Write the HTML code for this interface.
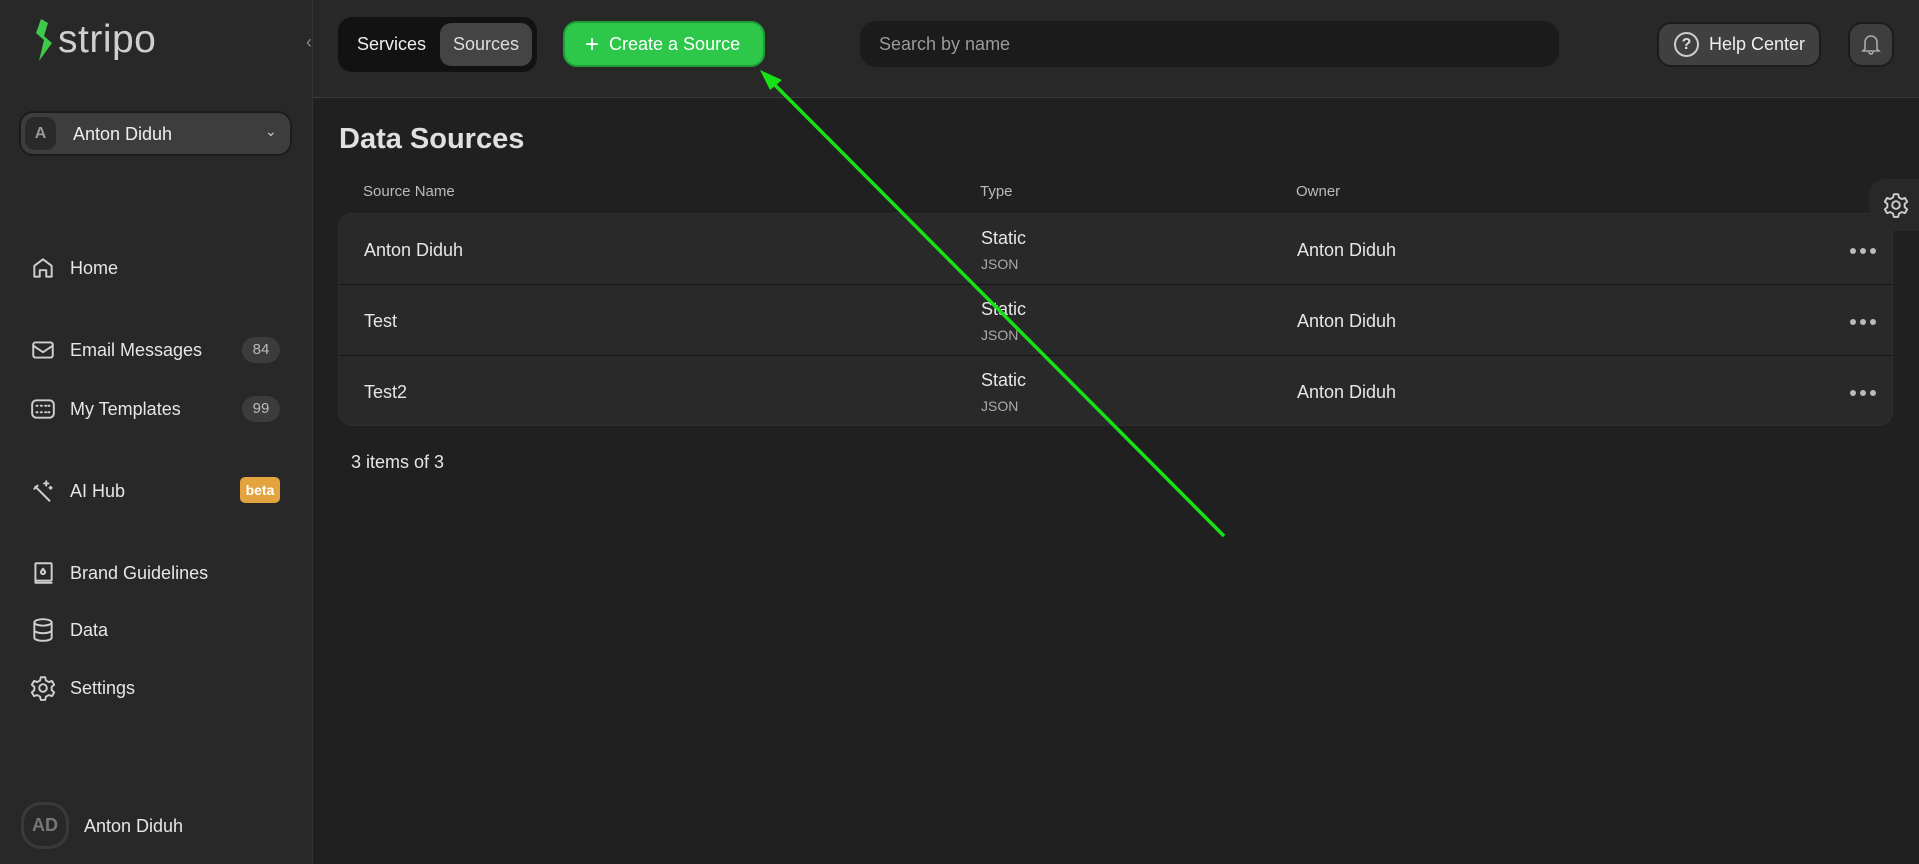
<!DOCTYPE html>
<html><head><meta charset="utf-8"><style>
*{box-sizing:border-box;margin:0;padding:0}
body{width:1919px;height:864px;overflow:hidden;background:#202020;font-family:"Liberation Sans",sans-serif;color:#e6e6e6;position:relative}
.abs{position:absolute}
#side{left:0;top:0;width:313px;height:864px;background:#282828;border-right:1px solid #333}
#head{left:313px;top:0;width:1606px;height:98px;background:#282828;border-bottom:1px solid #3a3a3a}
.nav{position:absolute;left:30px;display:flex;align-items:center;font-size:18px;color:#e6e6e6}
.nav svg{width:26px;height:26px;margin-right:14px;fill:none;stroke:#cfcfcf;stroke-width:1.8;stroke-linecap:round;stroke-linejoin:round}
.badge{position:absolute;left:242px;width:38px;height:26px;border-radius:13px;background:#3c3c3c;color:#bbb;font-size:15px;text-align:center;line-height:26px}
.row{position:absolute;left:0;width:1555px;height:71px;border-bottom:1px solid #151515}
.row .n{position:absolute;left:25px;top:26px;font-size:18px}
.row .t{position:absolute;left:642px;top:14px;font-size:18px}
.row .j{position:absolute;left:642px;top:42px;font-size:14px;color:#aaa}
.row .o{position:absolute;left:958px;top:26px;font-size:18px}
.row .d{position:absolute;right:18px;top:34px;display:flex;gap:4px}
.row .d i{width:6px;height:6px;border-radius:3px;background:#bbb}
</style></head><body>
<div id="side" class="abs">
  <svg class="abs" style="left:32px;top:18px" width="24" height="44" viewBox="0 0 24 44"><path d="M9 1 L4 15 L12 22 L7 43 L20 25 L12 18 L16 5 Z" fill="#3ec94a"/></svg>
  <div class="abs" style="left:58px;top:18px;font-size:39px;color:#cfcfcf;letter-spacing:0.5px">stripo</div>
  <div class="abs" style="left:306px;top:32px;color:#888;font-size:18px">‹</div>
  <div class="abs" style="left:19px;top:111px;width:273px;height:45px;border-radius:14px;background:#3d3d3d;border:2px solid #1c1c1c">
    <div class="abs" style="left:4px;top:4px;width:31px;height:33px;border-radius:10px;background:#2a2a2a;color:#999;font-size:16px;text-align:center;line-height:33px;font-weight:bold">A</div>
    <div class="abs" style="left:52px;top:11px;font-size:18px;color:#eee">Anton Diduh</div>
    <div class="abs" style="left:244px;top:10px;color:#ccc;font-size:14px">⌄</div>
  </div>
  <div class="nav" style="top:255px"><svg viewBox="0 0 24 24"><path d="M4 20V10l8-6 8 6v10h-5v-6h-6v6z"/></svg>Home</div>
  <div class="nav" style="top:337px"><svg viewBox="0 0 24 24"><rect x="3" y="5" width="18" height="14" rx="2"/><path d="M3 8l9 6 9-6"/></svg>Email Messages</div>
  <div class="badge" style="top:337px">84</div>
  <div class="nav" style="top:396px"><svg viewBox="0 0 24 24"><rect x="2" y="4" width="20" height="16" rx="4"/><path d="M6 9h1M10 9h1M14 9h1M17 9h1M6 15h1M10 15h1M14 15h1M17 15h1" stroke-dasharray="1 2"/></svg>My Templates</div>
  <div class="badge" style="top:396px">99</div>
  <div class="nav" style="top:478px"><svg viewBox="0 0 24 24"><path d="M5 8l13 13M4 10l3-3"/><path d="M15 3v4M13 5h4M19 8v2M18 9h2"/></svg>AI Hub</div>
  <div class="abs" style="left:240px;top:477px;width:40px;height:26px;border-radius:5px;background:#e3a33e;color:#fff;font-size:14px;font-weight:bold;text-align:center;line-height:26px">beta</div>
  <div class="nav" style="top:560px"><svg viewBox="0 0 24 24"><rect x="5" y="3" width="15" height="16" rx="1"/><path d="M5 19v2h15M12 8l-2 3a2 2 0 104 0z"/></svg>Brand Guidelines</div>
  <div class="nav" style="top:617px"><svg viewBox="0 0 24 24"><ellipse cx="12" cy="5" rx="8" ry="3"/><path d="M4 5v14c0 1.7 3.6 3 8 3s8-1.3 8-3V5M4 12c0 1.7 3.6 3 8 3s8-1.3 8-3"/></svg>Data</div>
  <div class="nav" style="top:675px"><svg viewBox="0 0 24 24"><circle cx="12" cy="12" r="3.5"/><path d="M10 2h4l.7 3 2.6 1.5 3-1 2 3.5-2.3 2v3l2.3 2-2 3.5-3-1-2.6 1.5-.7 3h-4l-.7-3-2.6-1.5-3 1-2-3.5 2.3-2v-3l-2.3-2 2-3.5 3 1L9.3 5z"/></svg>Settings</div>
  <div class="abs" style="left:21px;top:802px;width:48px;height:47px;border-radius:20px;border:3px solid #3a3a3a;color:#777;font-weight:bold;font-size:18px;text-align:center;line-height:41px">AD</div>
  <div class="abs" style="left:84px;top:816px;font-size:18px">Anton Diduh</div>
</div>
<div id="head" class="abs">
  <div class="abs" style="left:25px;top:17px;width:199px;height:55px;border-radius:14px;background:#121212"></div>
  <div class="abs" style="left:44px;top:34px;font-size:18px;color:#eee">Services</div>
  <div class="abs" style="left:127px;top:23px;width:92px;height:43px;border-radius:11px;background:#444"></div>
  <div class="abs" style="left:140px;top:34px;font-size:18px;color:#ddd">Sources</div>
  <div class="abs" style="left:250px;top:21px;width:202px;height:46px;border-radius:14px;background:#2dc84a;border:2px solid #1f9e36;color:#fff;font-size:18px;line-height:42px;padding-left:20px;white-space:nowrap"><span style="font-size:24px;vertical-align:-2px;margin-right:10px">+</span>Create a Source</div>
  <div class="abs" style="left:547px;top:21px;width:699px;height:46px;border-radius:16px;background:#1b1b1b;color:#9a9a9a;font-size:18px;line-height:46px;padding-left:19px">Search by name</div>
  <div class="abs" style="left:1344px;top:22px;width:164px;height:45px;border-radius:14px;background:#404040;border:2px solid #1c1c1c;font-size:18px;line-height:41px;padding-left:50px;color:#eee">Help Center</div>
  <div class="abs" style="left:1361px;top:32px;width:25px;height:25px;border-radius:50%;border:2px solid #ccc;color:#ddd;font-size:16px;font-weight:bold;text-align:center;line-height:21px">?</div>
  <div class="abs" style="left:1535px;top:22px;width:46px;height:45px;border-radius:14px;background:#3e3e3e;border:2px solid #1c1c1c"></div>
  <svg class="abs" style="left:1548px;top:33px" width="20" height="22" viewBox="0 0 20 22"><path d="M4 16V9a6 6 0 0112 0v7l2 2H2zM8 19a2 2 0 004 0" fill="none" stroke="#aaa" stroke-width="1.6"/></svg>
</div>
<div class="abs" style="left:339px;top:123px;font-size:29px;font-weight:bold;color:#e0e0e0">Data Sources</div>
<div class="abs" style="left:363px;top:183px;font-size:15px;color:#bbb">Source Name</div>
<div class="abs" style="left:980px;top:183px;font-size:15px;color:#bbb">Type</div>
<div class="abs" style="left:1296px;top:183px;font-size:15px;color:#bbb">Owner</div>
<div class="abs" style="left:338px;top:213px;width:1555px;height:213px;border-radius:14px;background:#292929;overflow:hidden;border:1px solid #2e2e2e">
  <div class="row" style="top:0"><div class="n">Anton Diduh</div><div class="t">Static</div><div class="j">JSON</div><div class="o">Anton Diduh</div><div class="d"><i></i><i></i><i></i></div></div>
  <div class="row" style="top:71px"><div class="n">Test</div><div class="t">Static</div><div class="j">JSON</div><div class="o">Anton Diduh</div><div class="d"><i></i><i></i><i></i></div></div>
  <div class="row" style="top:142px;border-bottom:none"><div class="n">Test2</div><div class="t">Static</div><div class="j">JSON</div><div class="o">Anton Diduh</div><div class="d"><i></i><i></i><i></i></div></div>
</div>
<div class="abs" style="left:1869px;top:179px;width:60px;height:52px;border-radius:16px 0 0 16px;background:#282828"></div>
<svg class="abs" style="left:1883px;top:192px" width="26" height="26" viewBox="0 0 24 24"><g fill="none" stroke="#ccc" stroke-width="1.8" stroke-linejoin="round"><circle cx="12" cy="12" r="3.5"/><path d="M10 2h4l.7 3 2.6 1.5 3-1 2 3.5-2.3 2v3l2.3 2-2 3.5-3-1-2.6 1.5-.7 3h-4l-.7-3-2.6-1.5-3 1-2-3.5 2.3-2v-3l-2.3-2 2-3.5 3 1L9.3 5z"/></g></svg>
<div class="abs" style="left:351px;top:452px;font-size:18px">3 items of 3</div>
<svg class="abs" style="left:0;top:0" width="1919" height="864"><line x1="1224" y1="536" x2="768" y2="78" stroke="#16e016" stroke-width="3.5"/><polygon points="760,70 782,80 770,90" fill="#16e016"/></svg>
</body></html>
